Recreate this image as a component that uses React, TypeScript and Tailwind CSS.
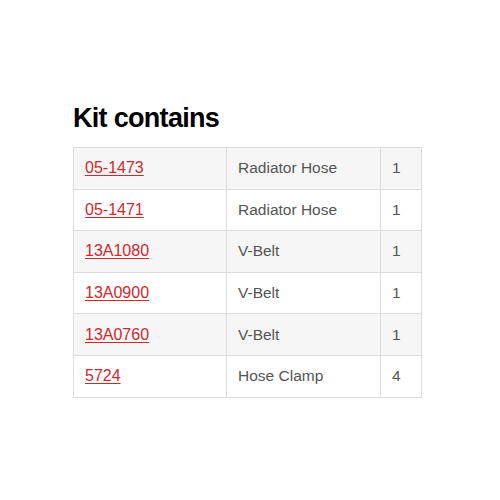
import React from "react";

const rows = [
  ["05-1473", "Radiator Hose", "1"],
  ["05-1471", "Radiator Hose", "1"],
  ["13A1080", "V-Belt", "1"],
  ["13A0900", "V-Belt", "1"],
  ["13A0760", "V-Belt", "1"],
  ["5724", "Hose Clamp", "4"],
];

export default function App() {
  return (
    <div className="w-[500px] h-[500px] bg-white pt-[102px] pl-[73px]" style={{ fontFamily: '"Liberation Sans", Arial, sans-serif' }}>
      <h2 className="text-[27px] leading-[32px] font-bold text-black tracking-[-0.7px] mb-[13px]">Kit contains</h2>
      <table className="border-collapse border border-[#dddddd]">
        <tbody>
          {rows.map((r, i) => (
            <tr key={i} className={i % 2 === 0 ? "bg-[#f6f6f6]" : "bg-white"}>
              <td className="border border-[#dddddd] w-[153px] h-[41.6px] p-0 pl-[11px] align-middle text-[16px] leading-[20px]">
                <a className="text-[#d0282e] underline underline-offset-[2px]">{r[0]}</a>
              </td>
              <td className="border border-[#dddddd] w-[154px] h-[41.6px] p-0 pl-[11px] text-[#555555] text-[15.5px] leading-[20px]">{r[1]}</td>
              <td className="border border-[#dddddd] w-[41px] h-[41.6px] p-0 pl-[11px] text-[#555555] text-[15.5px] leading-[20px]">{r[2]}</td>
            </tr>
          ))}
        </tbody>
      </table>
    </div>
  );
}
